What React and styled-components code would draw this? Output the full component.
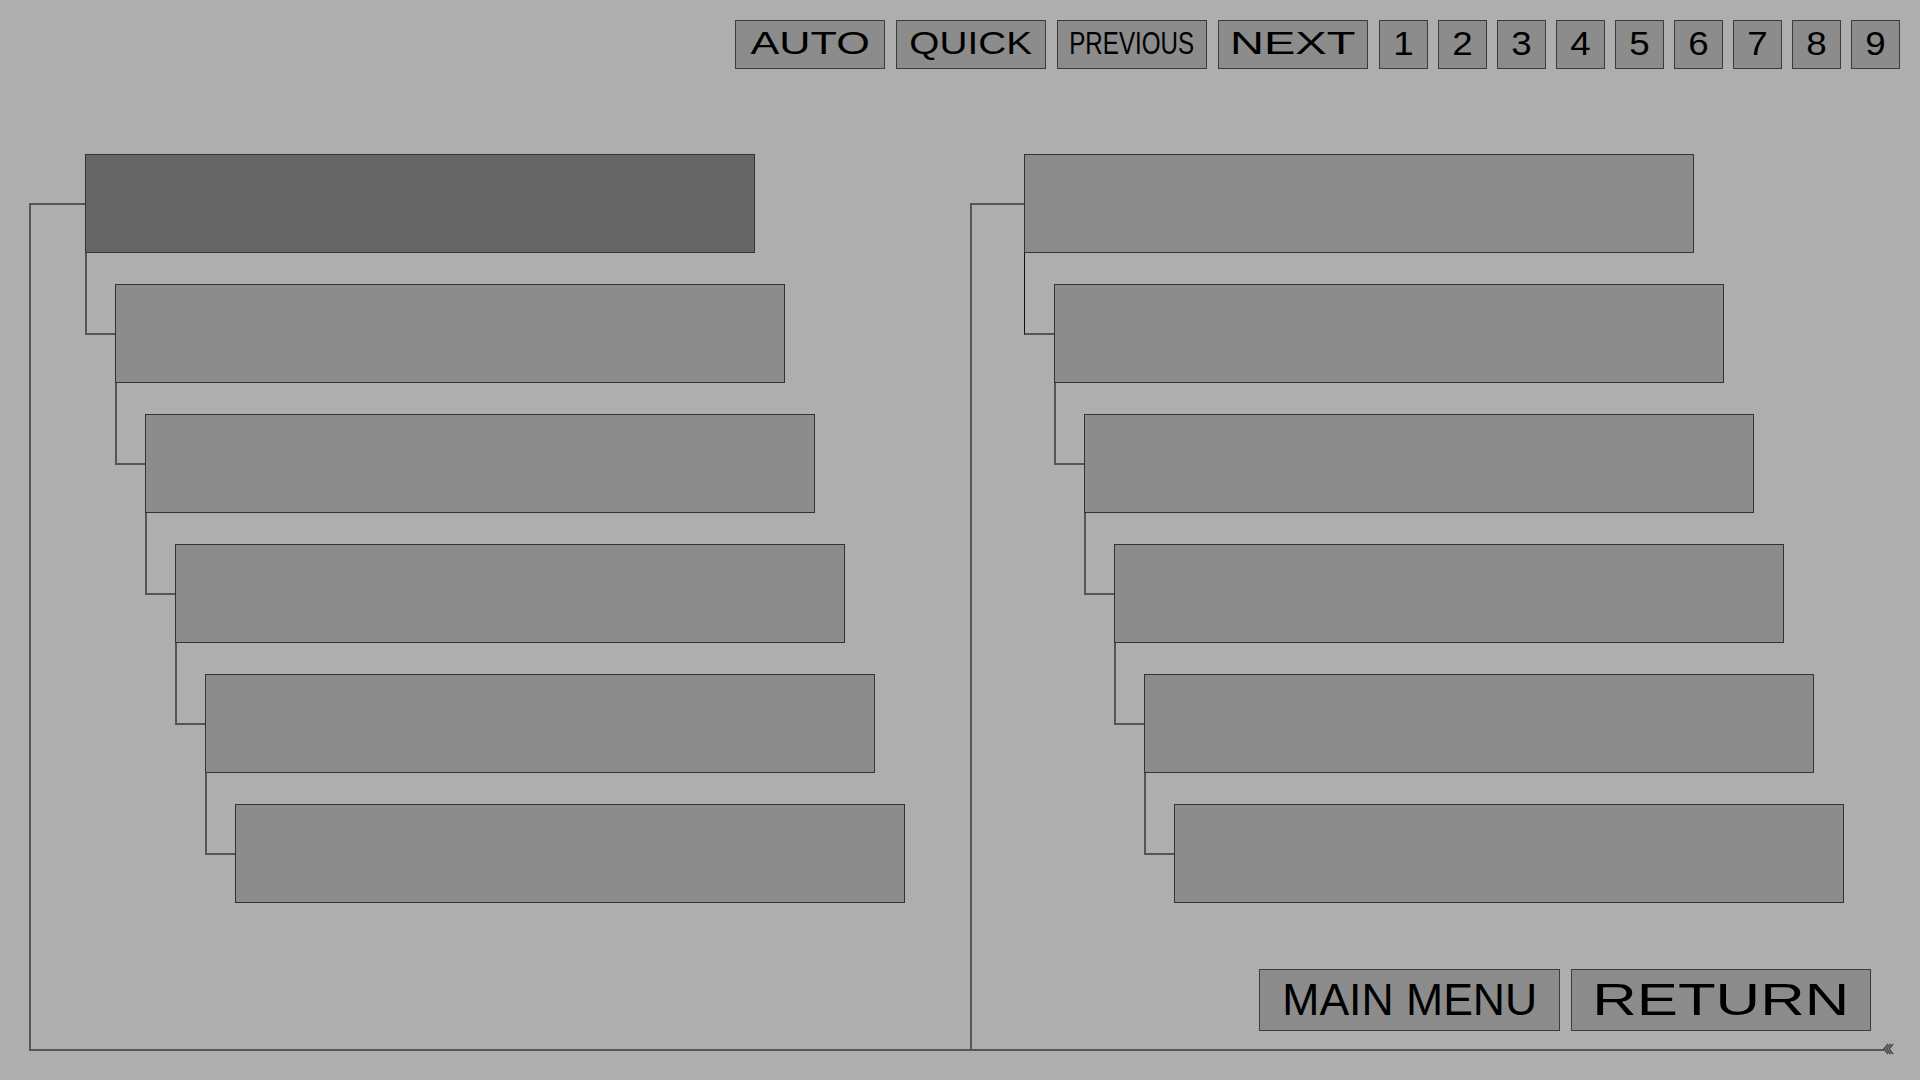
import React from "react";
import styled, { createGlobalStyle } from "styled-components";

const GlobalStyle = createGlobalStyle`
  html, body {
    margin: 0;
    padding: 0;
  }
  body {
    background: #aeaeae;
    font-family: "Liberation Sans", Arial, sans-serif;
    overflow: hidden;
  }
`;

const Screen = styled.div`
  width: 1920px;
  height: 1080px;
  display: flex;
  flex-direction: column;
`;

// top key strip
const TopBar = styled.div`
  display: flex;
  justify-content: flex-end;
  gap: 11px;
  height: 49px;
  padding: 20px 20px 0 0;
`;

const KeyGroup = styled.div`
  display: flex;
  gap: ${(p) => p.$gap}px;
`;

const KeyButton = styled.button`
  width: ${(p) => p.$w}px;
  height: ${(p) => p.$h}px;
  margin: 0;
  padding: 0 0 ${(p) => p.$lift || 0}px;
  box-sizing: border-box;
  background: #8c8c8c;
  border: 1px solid #3c3c3c;
  display: flex;
  align-items: center;
  justify-content: center;
  overflow: hidden;
  white-space: nowrap;
  font-family: "Liberation Sans", Arial, sans-serif;
  font-size: ${(p) => p.$fs}px;
  line-height: 1;
  color: #000;
  cursor: pointer;
`;

const Label = styled.span`
  display: inline-block;
  transform: scaleX(${(p) => p.$sx});
`;

// tree area
const Stage = styled.main`
  position: relative;
  display: flex;
  margin: 85px 0 0 29px;
  width: 1855px;
  height: 895px;
  border-bottom: 2px solid #555;
`;

const Panel = styled.section`
  display: flex;
  width: ${(p) => (p.$w ? `${p.$w}px` : "auto")};
  flex: ${(p) => (p.$w ? "none" : 1)};
`;

const Bracket = styled.div`
  width: ${(p) => p.$w}px;
  flex-shrink: 0;
  margin-top: 49px;
  box-sizing: border-box;
  border-top: 2px solid #555;
  border-left: 2px solid #555;
`;

const Column = styled.div`
  display: flex;
  flex-direction: column;
  flex: 1;
`;

const Slot = styled.div`
  width: 670px;
  height: 99px;
  box-sizing: border-box;
  background: ${(p) => (p.$active ? "#666666" : "#8c8c8c")};
  border: 1px solid #333;
`;

const Branch = styled.div`
  display: flex;
  align-items: flex-start;
`;

const Elbow = styled.div`
  width: 30px;
  height: 82px;
  flex-shrink: 0;
  box-sizing: border-box;
  border-left: ${(p) => (p.$thin ? "1px solid #111" : "2px solid #555")};
  border-bottom: 2px solid #555;
`;

const ChildCol = styled.div`
  padding-top: 31px;
`;

const Footer = styled.div`
  margin-top: auto;
  display: flex;
  justify-content: flex-end;
  gap: 11px;
  padding: 0 13px 18px 0;
`;

const EndMark = styled.svg`
  position: absolute;
  right: -11px;
  bottom: -6px;
`;

const modeKeys = [
  { label: "AUTO", sx: 1.35 },
  { label: "QUICK", sx: 1.21 },
  { label: "PREVIOUS", sx: 0.755 },
  { label: "NEXT", sx: 1.47 },
];

const pageKeys = ["1", "2", "3", "4", "5", "6", "7", "8", "9"];

function TreeNode({ depth, max, active, thinFirst }) {
  return (
    <div>
      <Slot $active={active && depth === 0} />
      {depth < max && (
        <Branch>
          <Elbow $thin={thinFirst && depth === 0} />
          <ChildCol>
            <TreeNode depth={depth + 1} max={max} />
          </ChildCol>
        </Branch>
      )}
    </div>
  );
}

export default function App() {
  return (
    <>
      <GlobalStyle />
      <Screen>
        <TopBar>
          <KeyGroup $gap={11}>
            {modeKeys.map((k) => (
              <KeyButton key={k.label} $w={150} $h={49} $fs={32} $lift={4}>
                <Label $sx={k.sx}>{k.label}</Label>
              </KeyButton>
            ))}
          </KeyGroup>
          <KeyGroup $gap={10}>
            {pageKeys.map((n) => (
              <KeyButton key={n} $w={49} $h={49} $fs={34} $lift={4}>
                <Label $sx={1.08}>{n}</Label>
              </KeyButton>
            ))}
          </KeyGroup>
        </TopBar>

        <Stage>
          <Panel $w={941}>
            <Bracket $w={56} />
            <Column>
              <TreeNode depth={0} max={5} active />
            </Column>
          </Panel>
          <Panel>
            <Bracket $w={54} />
            <Column>
              <TreeNode depth={0} max={5} thinFirst />
              <Footer>
                <KeyButton $w={301} $h={62} $fs={45} $lift={2}>
                  <Label $sx={0.99}>MAIN MENU</Label>
                </KeyButton>
                <KeyButton $w={300} $h={62} $fs={45} $lift={2}>
                  <Label $sx={1.37}>RETURN</Label>
                </KeyButton>
              </Footer>
            </Column>
          </Panel>
          <EndMark width="12" height="12" viewBox="0 0 12 12">
            <g fill="none" stroke="#444" strokeWidth="1.4">
              <polyline points="5,1 1,6 5,11" />
              <polyline points="7.5,1 3.5,6 7.5,11" />
              <polyline points="10,1 6,6 10,11" />
            </g>
          </EndMark>
        </Stage>
      </Screen>
    </>
  );
}
